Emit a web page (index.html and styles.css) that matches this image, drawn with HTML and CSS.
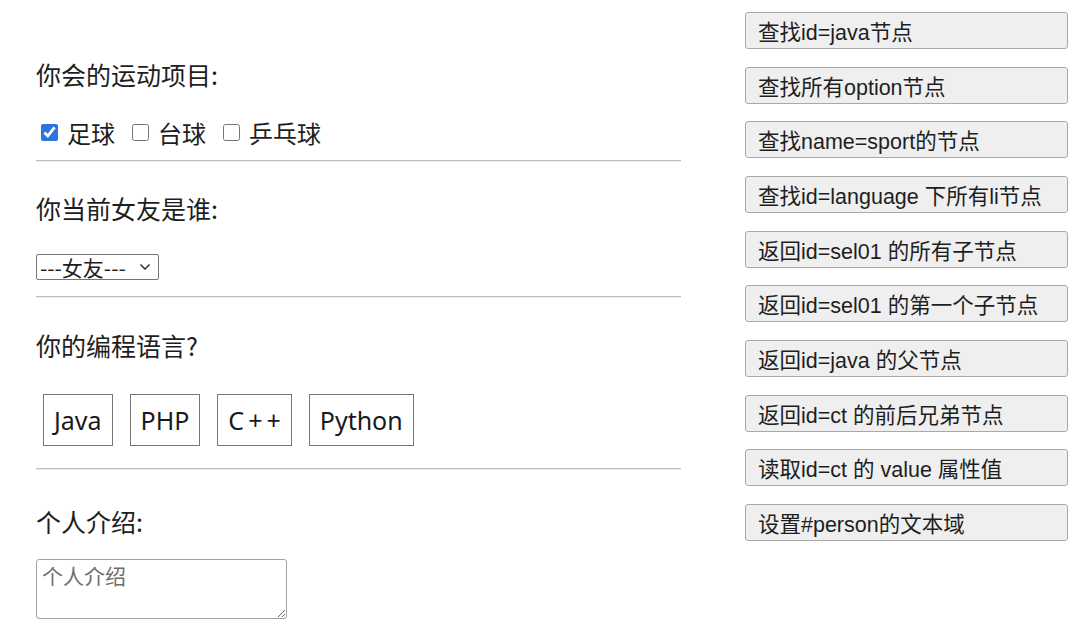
FILE: index.html
```html
<!DOCTYPE html>
<html lang="zh-CN">
<head>
<meta charset="utf-8">
<title>DOM 练习</title>
<link rel="stylesheet" href="styles.css">
</head>
<body>
<div class="page">
  <div class="form-col">
    <p class="title t1">你会的运动项目:</p>
    <div class="checks">
      <label class="check"><input type="checkbox" name="sport" value="football" checked>足球</label>
      <label class="check"><input type="checkbox" name="sport" value="billiards">台球</label>
      <label class="check"><input type="checkbox" name="sport" value="pingpong">乒乓球</label>
    </div>
    <hr class="rule r1">
    <p class="title t2">你当前女友是谁:</p>
    <div class="select-wrap">
      <select class="girl" id="sel01" name="girl">
        <option>---女友---</option>
        <option>小红</option>
        <option>小丽</option>
      </select>
      <svg class="chev" width="12" height="8" viewBox="0 0 12 8" aria-hidden="true"><path d="M1.5 1.5 L6 6 L10.5 1.5" fill="none" stroke="#222" stroke-width="1.4"/></svg>
    </div>
    <hr class="rule r2">
    <p class="title t3">你的编程语言?</p>
    <ul class="langs" id="language">
      <li id="java">Java</li>
      <li>PHP</li>
      <li class="spaced">C++</li>
      <li>Python</li>
    </ul>
    <hr class="rule r3">
    <p class="title t4">个人介绍:</p>
    <textarea class="intro" id="person" placeholder="个人介绍"></textarea>
  </div>
  <div class="btn-col">
    <button class="act">查找id=java节点</button>
    <button class="act">查找所有option节点</button>
    <button class="act">查找name=sport的节点</button>
    <button class="act">查找id=language 下所有li节点</button>
    <button class="act">返回id=sel01 的所有子节点</button>
    <button class="act">返回id=sel01 的第一个子节点</button>
    <button class="act">返回id=java 的父节点</button>
    <button class="act">返回id=ct 的前后兄弟节点</button>
    <button class="act">读取id=ct 的 value 属性值</button>
    <button class="act">设置#person的文本域</button>
  </div>
</div>
</body>
</html>
```
FILE: styles.css
```css
html, body {
  margin: 0;
  padding: 0;
  background: #ffffff;
}
body {
  font-family: "Noto Sans CJK SC", "Noto Sans", sans-serif;
  color: #1e1e1e;
}
.page {
  display: flex;
  align-items: flex-start;
  width: 1090px;
  height: 632px;
  overflow: hidden;
}
.form-col {
  display: flex;
  flex-direction: column;
  align-items: flex-start;
  width: 645px;
  margin-left: 36px;
  padding-top: 56px;
}
.title {
  margin: 0;
  font-size: 25px;
  line-height: 36px;
  height: 36px;
}
.t2 { margin-top: 28px; }
.t3 { margin-top: 29px; }
.t4 { margin-top: 33px; }

.checks {
  display: flex;
  align-items: center;
  margin-top: 22px;
  height: 36px;
  font-size: 24px;
}
.check {
  display: inline-flex;
  align-items: center;
  gap: 9px;
  margin-right: 12px;
}
.check input {
  width: 17px;
  height: 17px;
  margin: 0 0 0 5px;
  accent-color: #2f74dd;
}
.rule {
  align-self: stretch;
  margin: 10px 0 0 0;
  height: 0;
  border: 0;
  border-top: 1px solid #bdbdbd;
  border-bottom: 1px solid #ececec;
}
.r2 { margin-top: 16px; }
.r3 { margin-top: 22px; }

.select-wrap {
  position: relative;
  margin-top: 28px;
  width: 123px;
  height: 26px;
}
.girl {
  appearance: none;
  -webkit-appearance: none;
  width: 123px;
  height: 26px;
  box-sizing: border-box;
  font-family: "Noto Sans CJK SC", sans-serif;
  font-size: 21px;
  line-height: 24px;
  color: #1e1e1e;
  border: 1px solid #767676;
  border-radius: 2px;
  background: #fff;
  padding: 0 0 0 3px;
}
.chev {
  position: absolute;
  right: 8px;
  top: 9px;
  pointer-events: none;
}

.langs {
  list-style: none;
  display: flex;
  gap: 17px;
  margin: 31px 0 0 7px;
  padding: 0;
}
.langs li {
  height: 52px;
  box-sizing: border-box;
  border: 1px solid #777;
  padding: 0 10px;
  font-family: "Noto Sans", "Open Sans", sans-serif;
  font-size: 25px;
  line-height: 50px;
  color: #1a1a1a;
}
.langs li.spaced {
  letter-spacing: 4px;
  padding-right: 6px;
}

.intro {
  margin: 20px 0 0 0;
  width: 251px;
  height: 60px;
  box-sizing: border-box;
  border: 1.5px solid #a3a3a3;
  border-radius: 3px;
  padding: 2px 5px;
  font-family: "Noto Sans CJK SC", sans-serif;
  font-size: 21px;
  line-height: 26px;
  resize: both;
}
.intro::placeholder {
  color: #6e6e6e;
}

.btn-col {
  display: flex;
  flex-direction: column;
  gap: 17.67px;
  margin-left: 64px;
  padding-top: 12px;
  width: 323px;
}
.act {
  height: 37px;
  width: 323px;
  box-sizing: border-box;
  text-align: left;
  padding: 0 12px;
  background: #efefef;
  border: 1.5px solid #a9a9a9;
  border-radius: 3px;
  font-family: "Liberation Sans", "Noto Sans CJK SC", sans-serif;
  font-size: 21.5px;
  color: #1e1e1e;
}
```
